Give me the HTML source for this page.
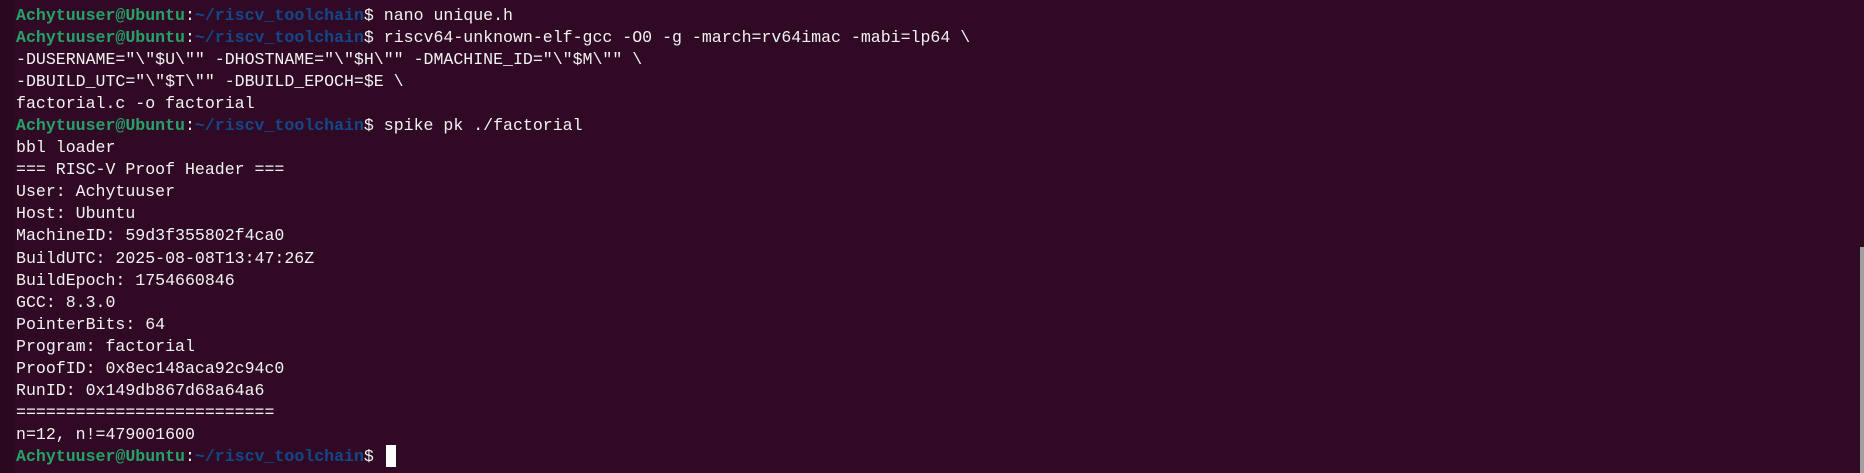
<!DOCTYPE html>
<html><head><meta charset="utf-8"><style>
html,body{margin:0;padding:0;width:1864px;height:473px;overflow:hidden;background:#300a24;}
.strip{position:absolute;left:0;top:0;width:14px;height:473px;background:#2a0920;}
pre{position:absolute;left:16px;top:5px;margin:0;font-family:"Liberation Mono",monospace;font-size:16.57px;line-height:22.04px;color:#f2f2f2;}
.g{color:#26a269;font-weight:bold}
.b{color:#12488b;font-weight:bold}
.cur{position:absolute;left:386px;top:445px;width:10px;height:22px;background:#fff}
.sb{position:absolute;left:1860px;top:247px;width:4px;height:226px;background:#a0a0a0;}
</style></head><body>
<div class="strip"></div>
<pre><span class="g">Achytuuser@Ubuntu</span>:<span class="b">~/riscv_toolchain</span>$ nano unique.h
<span class="g">Achytuuser@Ubuntu</span>:<span class="b">~/riscv_toolchain</span>$ riscv64-unknown-elf-gcc -O0 -g -march=rv64imac -mabi=lp64 \
-DUSERNAME="\"$U\"" -DHOSTNAME="\"$H\"" -DMACHINE_ID="\"$M\"" \
-DBUILD_UTC="\"$T\"" -DBUILD_EPOCH=$E \
factorial.c -o factorial
<span class="g">Achytuuser@Ubuntu</span>:<span class="b">~/riscv_toolchain</span>$ spike pk ./factorial
bbl loader
=== RISC-V Proof Header ===
User: Achytuuser
Host: Ubuntu
MachineID: 59d3f355802f4ca0
BuildUTC: 2025-08-08T13:47:26Z
BuildEpoch: 1754660846
GCC: 8.3.0
PointerBits: 64
Program: factorial
ProofID: 0x8ec148aca92c94c0
RunID: 0x149db867d68a64a6
==========================
n=12, n!=479001600
<span class="g">Achytuuser@Ubuntu</span>:<span class="b">~/riscv_toolchain</span>$ </pre>
<div class="cur"></div>
<div class="sb"></div>
</body></html>
